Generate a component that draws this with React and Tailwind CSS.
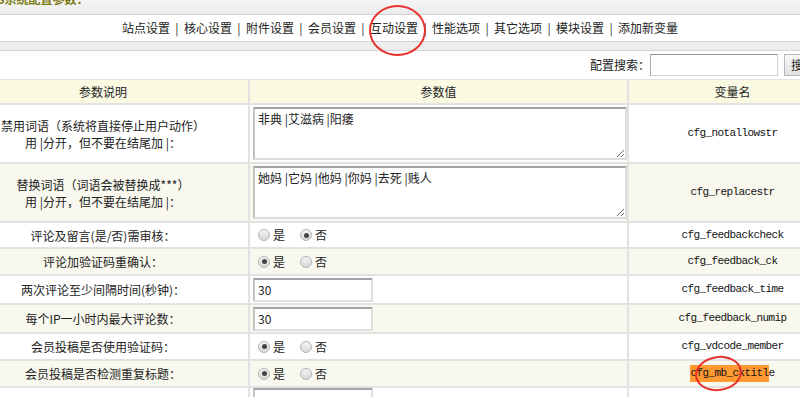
import { useState } from "react";

const navItems = ["站点设置", "核心设置", "附件设置", "会员设置", "互动设置", "性能选项", "其它选项", "模块设置", "添加新变量"];

function Radio({ checked }) {
  return (
    <span className="inline-flex items-center justify-center w-[12px] h-[12px] rounded-full border border-[#b4b4b4] bg-gradient-to-b from-[#f4f4f4] to-[#d9d9d9]">
      {checked && <span className="w-[5px] h-[5px] rounded-full bg-[#444]" />}
    </span>
  );
}

function YesNo({ yes }) {
  return (
    <div className="flex items-center pl-[8px] gap-[3px]">
      <Radio checked={yes} />
      <span className="mr-[12px]">是</span>
      <Radio checked={!yes} />
      <span>否</span>
    </div>
  );
}

function Area({ value }) {
  return (
    <textarea
      defaultValue={value}
      className="w-[374px] h-[53px] ml-[3px] mt-[2px] px-[3px] py-[2px] leading-[16px] text-[12px] border-2 border-t-[#a3a3a3] border-l-[#c4c4c4] border-r-[#dedede] border-b-[#dedede] bg-white outline-none"
    />
  );
}

function Field({ value }) {
  return (
    <input
      defaultValue={value}
      className="w-[120px] h-[24px] ml-[3px] px-[3px] text-[12px] border-2 border-t-[#a3a3a3] border-l-[#c4c4c4] border-r-[#dedede] border-b-[#dedede] bg-white outline-none"
    />
  );
}

const rows = [
  {
    h: "h-[57px]",
    label: (
      <>
        禁用词语（系统将直接停止用户动作）
        <br />
        用 |分开，但不要在结尾加 |：
      </>
    ),
    value: <Area value="非典 |艾滋病 |阳痿" />,
    name: "cfg_notallowstr",
    top: true,
  },
  {
    h: "h-[57px]",
    label: (
      <>
        替换词语（词语会被替换成***）
        <br />
        用 |分开，但不要在结尾加 |：
      </>
    ),
    value: <Area value="她妈 |它妈 |他妈 |你妈 |去死 |贱人" />,
    name: "cfg_replacestr",
    top: true,
  },
  { h: "h-[24px]", label: "评论及留言(是/否)需审核：", value: <YesNo yes={false} />, name: "cfg_feedbackcheck" },
  { h: "h-[25px]", label: "评论加验证码重确认：", value: <YesNo yes />, name: "cfg_feedback_ck" },
  { h: "h-[27px]", label: "两次评论至少间隔时间(秒钟)：", value: <Field value="30" />, name: "cfg_feedback_time" },
  { h: "h-[27px]", label: "每个IP一小时内最大评论数：", value: <Field value="30" />, name: "cfg_feedback_numip" },
  { h: "h-[25px]", label: "会员投稿是否使用验证码：", value: <YesNo yes />, name: "cfg_vdcode_member" },
  {
    h: "h-[25px]",
    label: "会员投稿是否检测重复标题：",
    value: <YesNo yes />,
    name: (
      <>
        <span className="bg-[#ff9a33]">cfg_mb_cktitl</span>e
      </>
    ),
  },
  { h: "h-[30px]", label: "操作内容（评论、留言等）", value: <Field value="" />, name: "cfg_xxx", top: true },
];

export default function App() {
  const [search, setSearch] = useState("");

  return (
    <div className="relative w-[800px] h-[397px] overflow-hidden bg-white text-[12px] text-[#222] font-['Noto_Sans_CJK_SC','Noto_Sans',sans-serif]">
      {/* title strip, cut off at the top */}
      <div className="h-[15px] overflow-hidden border-b border-[#d2d2d2] bg-gradient-to-b from-[#f6f6f6] to-[#ebebeb]">
        <div className="mt-[-9px] ml-[-3px] leading-[16px] text-[#7b7b12] font-bold whitespace-nowrap">S系统配置参数：</div>
      </div>

      <div className="h-[27px] flex items-center justify-center border-b border-[#d4d4d4] bg-white whitespace-nowrap">
        {navItems.map((item, i) => (
          <span key={item} className="flex items-center">
            {i > 0 && <span className="w-[14px] text-center text-[#333]">|</span>}
            <span>{item}</span>
          </span>
        ))}
      </div>

      <div className="h-[9px] bg-[#ededed] border-b border-[#d4d4d4]" />

      <div className="h-[28px] flex items-center pl-[590px] whitespace-nowrap bg-white">
        <span className="w-[64px]">配置搜索：</span>
        <input
          value={search}
          onChange={(e) => setSearch(e.target.value)}
          className="w-[128px] h-[22px] px-[3px] border border-t-[#8f8f8f] border-l-[#a8a8a8] border-r-[#d0d0d0] border-b-[#d0d0d0] outline-none"
        />
        <button className="ml-[6px] h-[22px] px-[6px] border border-[#b8b8b8] bg-gradient-to-b from-[#f8f8f8] to-[#e2e2e2]">搜索</button>
      </div>

      {/* the table is wider than the captured window: it runs past both edges */}
      <div className="ml-[-42px] w-[878px] grid grid-cols-[290px_377px_207px] gap-[2px] pt-[1px] bg-[#e2e2e2]">
        <div className="h-[23px] flex items-center justify-center bg-[#fafae2]">参数说明</div>
        <div className="h-[23px] flex items-center justify-center bg-[#fafae2]">参数值</div>
        <div className="h-[23px] flex items-center justify-center bg-[#fafae2]">变量名</div>

        {rows.map((r, i) => {
          const bg = i % 2 === 0 ? "bg-white" : "bg-[#f8f8ee]";
          return (
            <div key={i} className="contents">
              <div className={`${r.h} ${bg} flex items-center justify-center text-center leading-[17px]`}>{r.label}</div>
              <div className={`${r.h} ${bg} flex ${r.top ? "items-start" : "items-center"}`}>{r.value}</div>
              <div className={`${r.h} ${bg} flex items-center justify-center font-['Liberation_Mono',monospace] text-[11px] tracking-[-0.6px] text-[#111]`}>
                {r.name}
              </div>
            </div>
          );
        })}
      </div>

      {/* red annotation circles */}
      <div className="absolute left-[369px] top-[5px] w-[57px] h-[51px] rounded-[50%] border-2 border-[#e8322c]" />
      <div className="absolute left-[695px] top-[356px] w-[47px] h-[35px] rounded-[50%] border-2 border-[#e8322c] rotate-[-8deg]" />
    </div>
  );
}
